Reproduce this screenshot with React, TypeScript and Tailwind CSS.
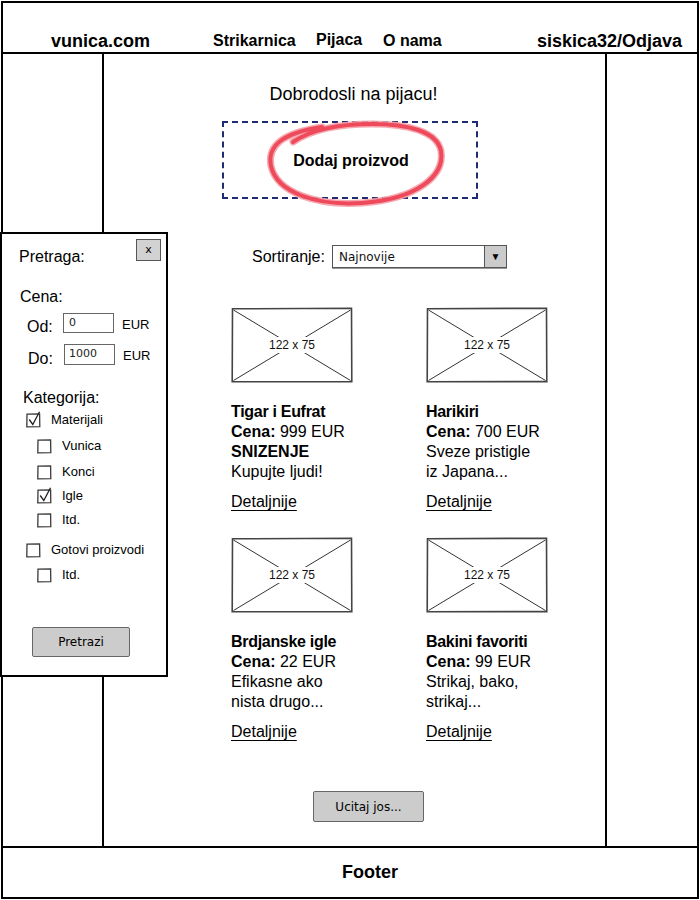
import React from "react";

const Placeholder = () => (
  <div className="w-[122px] h-[76px]">
    <svg width="122" height="76" viewBox="0 0 122 76">
      <path d="M1.5 1.8 L120.5 1.2 L120.8 74.6 L1.2 74.8 Z" fill="#fff" stroke="#444" strokeWidth="1.6" />
      <line x1="2.5" y1="3" x2="119.5" y2="73.5" stroke="#333" strokeWidth="1" />
      <line x1="119.5" y1="3" x2="2.5" y2="73.5" stroke="#333" strokeWidth="1" />
      <rect x="36" y="30" width="50" height="16" fill="#fff" />
      <text x="61" y="42" textAnchor="middle" fontSize="12" fontFamily="Liberation Sans, Arial, sans-serif" fill="#111">
        122 x 75
      </text>
    </svg>
  </div>
);

const Check = ({ checked }: { checked?: boolean }) => (
  <svg width="15" height="15" viewBox="0 0 15 15" className="overflow-visible shrink-0">
    <path d="M1 1.2 L13.6 0.9 L13.8 13.7 L0.8 13.9 Z" fill="#fff" stroke="#3a3a3a" strokeWidth="1.3" />
    {checked && <path d="M3.2 6.5 L6.8 11.5 L13.5 -1.2" fill="none" stroke="#222" strokeWidth="1.3" />}
  </svg>
);

const Row = ({ label, checked, sub, className }: { label: string; checked?: boolean; sub?: boolean; className: string }) => (
  <div className={`flex items-center h-[18px] ${sub ? "pl-[35px]" : "pl-[24px]"} ${className}`}>
    <Check checked={checked} />
    <span className="ml-[10px] text-[13px] leading-[16px] text-black">{label}</span>
  </div>
);

type Product = { title: string; price: string; lines: React.ReactNode[] };

const products: Product[] = [
  { title: "Tigar i Eufrat", price: "999 EUR", lines: [<b key="s">SNIZENJE</b>, "Kupujte ljudi!"] },
  { title: "Harikiri", price: "700 EUR", lines: ["Sveze pristigle", "iz Japana..."] },
  { title: "Brdjanske igle", price: "22 EUR", lines: ["Efikasne ako", "nista drugo..."] },
  { title: "Bakini favoriti", price: "99 EUR", lines: ["Strikaj, bako,", "strikaj..."] },
];

const Card = ({ p }: { p: Product }) => (
  <div className="flex flex-col">
    <Placeholder />
    <div className="mt-[19px] text-[16px] leading-[20px] text-black">
      <div className="font-bold tracking-[-0.3px]">{p.title}</div>
      <div>
        <b>Cena:</b> {p.price}
      </div>
      {p.lines.map((l, i) => (
        <div key={i}>{l}</div>
      ))}
    </div>
    <div className="mt-[10px] text-[16px] leading-[20px] underline underline-offset-[3px] decoration-[1px] text-black">
      Detaljnije
    </div>
  </div>
);

export default function App() {
  return (
    <div className="relative w-[700px] h-[900px] bg-white font-['Liberation_Sans',Arial,sans-serif] text-black overflow-hidden">
      <div className="absolute left-[1px] top-[1px] w-[698px] h-[898px] border-2 border-black flex flex-col">
        {/* Header */}
        <div className="h-[51px] border-b-2 border-black flex items-end pb-[1px] pl-[48px] font-bold">
          <div className="w-[162px] text-[18px] leading-[20px]">vunica.com</div>
          <div className="w-[103px] text-[16px] leading-[20px]">Strikarnica</div>
          <div className="w-[67px] text-[16px] leading-[20px] mb-[1px]">Pijaca</div>
          <div className="w-[154px] text-[16px] leading-[20px]">O nama</div>
          <div className="text-[18px] leading-[20px]">siskica32/Odjava</div>
        </div>

        {/* Middle */}
        <div className="h-[792px] flex">
          <div className="w-[101px] border-r-2 border-black" />
          <div className="w-[503px] border-r-2 border-black flex flex-col">
            <div className="pt-[30px] text-center text-[18px] leading-[20px] pr-[2px]">Dobrodosli na pijacu!</div>

            <div className="relative mt-[17px] ml-[118px] w-[256px] h-[78px] border-2 border-dashed border-[#1f2b73] flex items-center justify-center">
              <span className="text-[16px] font-bold leading-[20px] mt-[2px] ml-[2px]">Dodaj proizvod</span>
              <svg className="absolute left-[-2px] top-[-2px] overflow-visible pointer-events-none" width="256" height="78" viewBox="0 0 256 78">
                <path
                  d="M71 21 C90 8 115 3 150 3 C185 3 215 10 219 30 C223 55 195 78 140 82 C95 85 55 72 49 45 C45 25 60 12 100 6"
                  fill="none"
                  stroke="#f4a0a8"
                  strokeWidth="7"
                  strokeLinecap="round"
                  opacity="0.9"
                />
                <path
                  d="M71 21 C90 8 115 3 150 3 C185 3 215 10 219 30 C223 55 195 78 140 82 C95 85 55 72 49 45 C45 25 60 12 100 6"
                  fill="none"
                  stroke="#ec3a4c"
                  strokeWidth="4"
                  strokeLinecap="round"
                  opacity="0.85"
                />
              </svg>
            </div>

            <div className="mt-[46px] ml-[148px] flex items-center h-[23px]">
              <div className="w-[80px] text-[16px] leading-[20px]">Sortiranje:</div>
              <div className="w-[175px] h-[23px] border border-[#555] bg-white flex shadow-[0_1px_0_#999]">
                <div className="flex-1 flex items-center pl-[6px] font-['DejaVu_Sans',sans-serif] text-[12px] text-[#111]">
                  Najnovije
                </div>
                <div className="w-[22px] h-full bg-[#cbcbcb] border-l border-[#555] flex items-center justify-center text-[10px] leading-none">
                  ▼
                </div>
              </div>
            </div>

            <div className="mt-[39px] ml-[127px] grid grid-cols-[195px_195px] gap-y-[25px]">
              {products.map((p, i) => (
                <Card key={i} p={p} />
              ))}
            </div>

            <div className="mt-[49px] ml-[209px] w-[111px] h-[31px] bg-[#cccccc] border-[1.5px] border-[#666] rounded-[2px] flex items-center justify-center font-['DejaVu_Sans',sans-serif] text-[12px]">
              Ucitaj jos...
            </div>
          </div>
          <div className="flex-1" />
        </div>

        {/* Footer */}
        <div className="flex-1 border-t-2 border-black flex items-center justify-center pl-[40px] text-[18px] font-bold">
          Footer
        </div>
      </div>

      {/* Search panel overlay */}
      <div className="absolute left-0 top-[232px] w-[168px] h-[445px] border-2 border-black bg-white flex flex-col">
        <div className="flex items-start justify-between pt-[5px] pr-[5px]">
          <div className="mt-[8px] pl-[17px] text-[16px] leading-[20px]">Pretraga:</div>
          <div className="w-[25px] h-[22px] bg-[#d2d2d2] border border-[#555] flex items-center justify-center font-['DejaVu_Sans',sans-serif] text-[11px] leading-none pb-[2px]">
            x
          </div>
        </div>
        <div className="mt-[20px] pl-[18px] text-[16px] leading-[20px]">Cena:</div>

        <div className="mt-[6px] flex items-start h-[24px] pl-[25px]">
          <div className="w-[36px] mt-[4px] text-[16px] leading-[20px]">Od:</div>
          <div className="w-[51px] h-[20px] border-[1.5px] border-[#666] bg-white flex items-center pl-[5px] font-['DejaVu_Sans',sans-serif] text-[11px] text-[#222]">
            0
          </div>
          <div className="ml-[8px] mt-[4px] text-[13px] leading-[16px]">EUR</div>
        </div>

        <div className="mt-[7px] flex items-start h-[24px] pl-[26px]">
          <div className="w-[36px] mt-[5px] text-[16px] leading-[20px]">Do:</div>
          <div className="w-[51px] h-[21px] border-[1.5px] border-[#666] bg-white flex items-center pl-[4px] font-['DejaVu_Sans',sans-serif] text-[11px] text-[#222]">
            1000
          </div>
          <div className="ml-[8px] mt-[4px] text-[13px] leading-[16px]">EUR</div>
        </div>

        <div className="mt-[20px] pl-[21px] text-[16px] leading-[20px]">Kategorija:</div>

        <Row label="Materijali" checked className="mt-[3px]" />
        <Row label="Vunica" sub className="mt-[8px]" />
        <Row label="Konci" sub className="mt-[8px]" />
        <Row label="Igle" sub checked className="mt-[6px]" />
        <Row label="Itd." sub className="mt-[6px]" />
        <Row label="Gotovi proizvodi" className="mt-[12px]" />
        <Row label="Itd." sub className="mt-[7px]" />

        <div className="mt-[43px] ml-[30px] w-[98px] h-[30px] bg-[#cccccc] border-[1.5px] border-[#666] rounded-[2px] flex items-center justify-center font-['DejaVu_Sans',sans-serif] text-[12px]">
          Pretrazi
        </div>
      </div>
    </div>
  );
}
